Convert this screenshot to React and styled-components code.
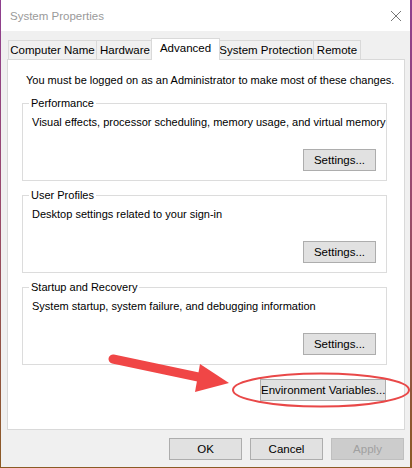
import React from 'react';
import styled, { createGlobalStyle } from 'styled-components';

const GlobalStyle = createGlobalStyle`
  html, body {
    margin: 0;
    padding: 0;
    background: linear-gradient(to bottom, #8e3f8f 0%, #9a4a6a 45%, #8b5a24 100%);
    height: 468px;
    overflow: hidden;
  }
  * { box-sizing: border-box; }
`;

const Window = styled.div`
  position: relative;
  width: 409px;
  height: 467px;
  margin-left: 1px;
  display: flex;
  flex-direction: column;
  font-family: "Liberation Sans", Arial, sans-serif;
  font-size: 11px;
  color: #000;
`;

const TitleBar = styled.div`
  height: 31px;
  background: #fff;
  display: flex;
  align-items: center;
  justify-content: space-between;
  padding: 0 8px 0 9px;
`;

const Title = styled.span`
  color: #9a9a9a;
  font-size: 11.5px;
  line-height: 16px;
`;

const CloseIcon = styled.svg`
  width: 12px;
  height: 12px;
`;

const Body = styled.div`
  flex: 1;
  background: #f0f0f0;
  display: flex;
  flex-direction: column;
  padding: 7px 5px 0 6px;
`;

const TabStrip = styled.div`
  display: flex;
  align-items: flex-end;
  padding-left: 1px;
  height: 21px;
`;

const Tab = styled.div`
  position: relative;
  width: ${p => p.$w}px;
  height: ${p => (p.$active ? 22 : 19)}px;
  margin: 0 ${p => (p.$active ? -2 : -1)}px ${p => (p.$active ? -1 : 0)}px
    ${p => (p.$active ? -2 : 0)}px;
  z-index: ${p => (p.$active ? 2 : 1)};
  border: 1px solid #d9d9d9;
  border-bottom: none;
  background: ${p => (p.$active ? '#fff' : '#f0f0f0')};
  display: flex;
  align-items: center;
  justify-content: center;
  padding-bottom: ${p => (p.$active ? 3 : 0)}px;
  white-space: nowrap;
  line-height: 16px;
  font-size: 11.5px;
`;

const Panel = styled.div`
  height: 371px;
  background: #fff;
  border: 1px solid #d9d9d9;
  display: flex;
  flex-direction: column;
  padding: 12px 17px 0 14px;
`;

const Notice = styled.p`
  margin: 0 0 7px 4px;
  line-height: 16px;
  white-space: nowrap;
`;

const Group = styled.fieldset`
  margin: ${p => (p.$first ? 0 : 6)}px 0 0 0;
  padding: 3px 10px 9px 8px;
  border: 1px solid #dcdcdc;
  min-width: 0;
  display: flex;
  flex-direction: column;
`;

const Legend = styled.legend`
  padding: 0 2px;
  margin-left: -2px;
  line-height: 16px;
`;

const Description = styled.div`
  line-height: 16px;
  padding-left: 1px;
  white-space: nowrap;
`;

const ButtonRow = styled.div`
  display: flex;
  justify-content: flex-end;
  gap: 8px;
  margin-top: ${p => p.$top || 0}px;
  margin-right: ${p => p.$right || 0}px;
`;

const Button = styled.button`
  width: ${p => p.$w || 73}px;
  height: 22px;
  padding: 0;
  font-family: inherit;
  font-size: 11.5px;
  white-space: nowrap;
  color: ${p => (p.disabled ? '#a0a0a0' : '#000')};
  background: ${p => (p.disabled ? '#cccccc' : '#e1e1e1')};
  border: 1px solid ${p => (p.disabled ? '#bfbfbf' : '#adadad')};
  border-radius: 0;
`;

const Footer = styled(ButtonRow)`
  margin-top: 8px;
  padding-right: 1px;
`;

const Annotation = styled.svg`
  position: absolute;
  left: -1px;
  top: 0;
  width: 412px;
  height: 468px;
  pointer-events: none;
  z-index: 5;
`;

const tabs = [
  { label: 'Computer Name', w: 89 },
  { label: 'Hardware', w: 58 },
  { label: 'Advanced', w: 69, active: true },
  { label: 'System Protection', w: 96 },
  { label: 'Remote', w: 48 },
];

const groups = [
  { title: 'Performance', text: 'Visual effects, processor scheduling, memory usage, and virtual memory' },
  { title: 'User Profiles', text: 'Desktop settings related to your sign-in' },
  { title: 'Startup and Recovery', text: 'System startup, system failure, and debugging information' },
];

export default function App() {
  return (
    <>
      <GlobalStyle />
      <Window>
        <TitleBar>
          <Title>System Properties</Title>
          <CloseIcon viewBox="0 0 12 12">
            <path d="M1 1 L11 11 M11 1 L1 11" stroke="#777" strokeWidth="1" fill="none" />
          </CloseIcon>
        </TitleBar>
        <Body>
          <TabStrip>
            {tabs.map(t => (
              <Tab key={t.label} $w={t.w} $active={t.active}>{t.label}</Tab>
            ))}
          </TabStrip>
          <Panel>
            <Notice>You must be logged on as an Administrator to make most of these changes.</Notice>
            {groups.map((g, i) => (
              <Group key={g.title} $first={i === 0}>
                <Legend>{g.title}</Legend>
                <Description>{g.text}</Description>
                <ButtonRow $top={19}>
                  <Button>Settings...</Button>
                </ButtonRow>
              </Group>
            ))}
            <ButtonRow $top={14} $right={1}>
              <Button $w={126}>Environment Variables...</Button>
            </ButtonRow>
          </Panel>
          <Footer>
            <Button>OK</Button>
            <Button>Cancel</Button>
            <Button disabled>Apply</Button>
          </Footer>
        </Body>
        <Annotation viewBox="0 0 412 468">
          <line x1="113" y1="359" x2="203" y2="378" stroke="#f04646" strokeWidth="9" strokeLinecap="round" />
          <polygon points="200,364 229,383 195,392" fill="#f04646" />
          <ellipse cx="321" cy="390" rx="88" ry="16.5" fill="none" stroke="#e94848" strokeWidth="2" />
        </Annotation>
      </Window>
    </>
  );
}
